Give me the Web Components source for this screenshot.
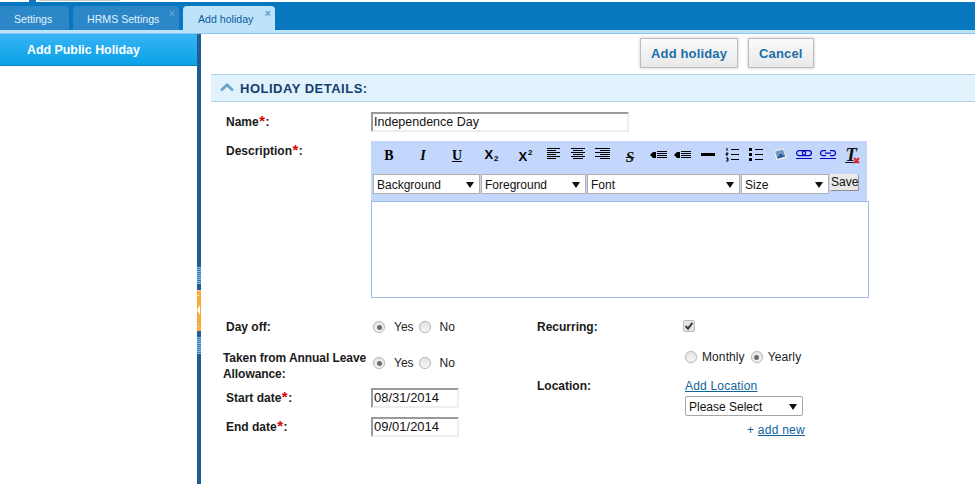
<!DOCTYPE html>
<html lang="en">
<head>
<meta charset="utf-8">
<title>Add holiday</title>
<style>
  html, body { margin: 0; height: 100%; overflow: hidden; background: #fff; }
  body { font: 12px "Liberation Sans", Arial, sans-serif; color: #111; }
</style>
</head>
<body>
<hr-app>
  <hr-topbar slot="top">
    <hr-tab>Settings</hr-tab>
    <hr-tab closable>HRMS Settings</hr-tab>
    <hr-tab closable active>Add holiday</hr-tab>
  </hr-topbar>
  <hr-sidebar slot="side">Add Public Holiday</hr-sidebar>

  <hr-actions>
    <hr-button>Add holiday</hr-button>
    <hr-button>Cancel</hr-button>
  </hr-actions>
  <hr-section>HOLIDAY DETAILS:</hr-section>

  <hr-holiday-form>
    <hr-label slot="name-label" required>Name</hr-label>
    <hr-input slot="name" width="258" size="12.5">Independence Day</hr-input>
    <hr-label slot="desc-label" required>Description</hr-label>
    <hr-editor slot="desc"></hr-editor>

    <hr-label slot="dayoff-label">Day off</hr-label>
    <hr-radio-group slot="dayoff"><hr-radio checked>Yes</hr-radio><hr-radio>No</hr-radio></hr-radio-group>
    <hr-label slot="taken-label">Taken from Annual Leave Allowance</hr-label>
    <hr-radio-group slot="taken"><hr-radio checked>Yes</hr-radio><hr-radio>No</hr-radio></hr-radio-group>
    <hr-label slot="start-label" required>Start date</hr-label>
    <hr-input slot="start" width="88">08/31/2014</hr-input>
    <hr-label slot="end-label" required>End date</hr-label>
    <hr-input slot="end" width="88">09/01/2014</hr-input>

    <hr-label slot="recurring-label">Recurring</hr-label>
    <hr-check slot="recurring"></hr-check>
    <hr-radio-group slot="period" tight><hr-radio>Monthly</hr-radio><hr-radio checked>Yearly</hr-radio></hr-radio-group>
    <hr-label slot="location-label">Location</hr-label>
    <hr-location slot="location"></hr-location>
  </hr-holiday-form>
</hr-app>

<script>
/** Build a shadow root from a markup string. */
function shadow (element, html) {
  element.attachShadow({ mode: 'open' }).innerHTML = html
  return element.shadowRoot
}

class HrApp extends HTMLElement {
  constructor () {
    super()
    shadow(this, `
      <style>
        :host { display: flex; flex-direction: column; height: 484px; width: 975px; overflow: hidden; }
        .body { display: flex; flex: 1; min-height: 0; }
        .divider {
          width: 4px; background: #1f5c94; margin-left: 197px;
          display: flex; flex-direction: column; padding-top: 233px; box-sizing: border-box;
        }
        .side { position: absolute; width: 197px; }
        .grip {
          height: 17px; flex: none;
          background: repeating-linear-gradient(#8dbde2 0 1px, #2f77b3 1px 2px);
        }
        .handle {
          height: 41px; flex: none; margin: 6px 0; background: #fca93c; position: relative;
          border-top: 1px solid #ffd28c; box-sizing: border-box;
        }
        .handle::before {
          content: ""; position: absolute; left: 1px; top: 4px; width: 1px; height: 30px;
          border-top: 1px solid #fff; border-bottom: 1px solid #fff;
        }
        .handle::after {
          content: ""; position: absolute; left: 0; top: 14px;
          border: 5px solid transparent; border-right: 3px solid #fff; border-left: 0;
        }
        main { flex: 1; min-width: 0; }
      </style>
      <slot name="top"></slot>
      <div class="body">
        <div class="side"><slot name="side"></slot></div>
        <div class="divider"><div class="grip"></div><div class="handle"></div><div class="grip"></div></div>
        <main><slot></slot></main>
      </div>`)
  }
}

class HrTopbar extends HTMLElement {
  constructor () {
    super()
    shadow(this, `
      <style>
        :host { display: block; height: 34px; background: #fff; }
        .logo { height: 2px; overflow: hidden; padding-left: 29px; display: flex; gap: 3px; }
        .logo i { display: block; width: 7px; height: 2px; background: #1b6fc0; }
        .logo b { display: block; width: 81px; height: 1px; background: #c4c8cc; }
        .bar {
          height: 28px; background: #0777bf; box-sizing: border-box; padding-top: 4px;
          display: flex; gap: 4px;
        }
        .rule { height: 4px; box-sizing: border-box; background: #bde3fb; border-bottom: 1px solid #8cc5ee; }
      </style>
      <div class="logo"><i></i><b></b></div>
      <div class="bar"><slot></slot></div>
      <div class="rule"></div>`)
  }
}

class HrTab extends HTMLElement {
  constructor () {
    super()
    shadow(this, `
      <style>
        :host {
          display: block; height: 24px; box-sizing: border-box; position: relative; flex: none;
          padding: 6px 0 0 14px; font-size: 10.6px; line-height: 14px; width: 106px;
          background: #2c87c9; color: #e4f2fb; border-radius: 4px 4px 0 0;
        }
        :host(:first-child) { width: 69px; border-top-left-radius: 0; }
        :host([active]) { background: #bde3fb; color: #0c5b98; padding-left: 15px; width: 92px; }
        .x { display: none; position: absolute; right: 4px; top: 1px; font: bold 11px/12px "Liberation Sans", sans-serif; color: #5ea2d2; }
        :host([closable]) .x { display: block; }
        :host([active]) .x { color: #5b9cc9; }
      </style>
      <slot></slot><span class="x">×</span>`)
  }
}

class HrSidebar extends HTMLElement {
  constructor () {
    super()
    shadow(this, `
      <style>
        :host {
          display: block; height: 32px; box-sizing: border-box; padding: 9px 0 0 27px;
          font: bold 12.4px/15px "Liberation Sans", sans-serif; color: #fff;
          background: linear-gradient(#37b4f3, #0aa2e8); border-bottom: 1px solid #0c84c2;
        }
      </style>
      <slot></slot>`)
  }
}

class HrActions extends HTMLElement {
  constructor () {
    super()
    shadow(this, `
      <style>
        :host {
          display: flex; gap: 10px; height: 40px; box-sizing: border-box;
          padding: 4px 0 0 439px; align-items: flex-start;
        }
      </style>
      <slot></slot>`)
  }
}

class HrButton extends HTMLElement {
  constructor () {
    super()
    shadow(this, `
      <style>
        :host {
          display: block; height: 30px; box-sizing: border-box; padding: 0 10px;
          font: bold 13px/29px "Liberation Sans", sans-serif; letter-spacing: .15px; color: #1b6fa8;
          background: linear-gradient(#fbfbfb, #e9e9e9); border: 1px solid #bdbdbd;
          box-shadow: 0 0 3px #c8c8c8;
        }
      </style>
      <slot></slot>`)
  }
}

class HrSection extends HTMLElement {
  constructor () {
    super()
    shadow(this, `
      <style>
        :host {
          display: flex; align-items: center; gap: 6px; height: 28px; box-sizing: border-box;
          margin-left: 10px; padding: 1px 0 0 9px;
          background: #e1f2fd; border-top: 1px solid #b0d0e6; border-bottom: 1px solid #b0d0e6;
          font: bold 13px/16px "Liberation Sans", sans-serif; letter-spacing: .5px; color: #123f6e;
        }
        svg { display: block; margin-top: -2px; }
      </style>
      <svg width="14" height="9" viewBox="0 0 14 9"><path d="M1 7.500 7 2l6 5.500" fill="none" stroke="#6ea3c9" stroke-width="2.800"/></svg>
      <slot></slot>`)
  }
}

class HrHolidayForm extends HTMLElement {
  constructor () {
    super()
    shadow(this, `
      <style>
        :host { display: block; margin-left: 10px; }
        .row { display: flex; }
        .lab { width: 160px; flex: none; box-sizing: border-box; padding-left: 15px; }
        .top { padding-top: 10px; height: 29px; box-sizing: border-box; }
        .top .lab, .center .lab { display: flex; align-items: center; }
        .desc { margin-top: 10px; height: 157px; }
        .desc .lab { padding-top: 2px; }
        .bottom { display: flex; margin-top: 20px; }
        .left { width: 326px; flex: none; }
        .center { height: 18px; }
        .center .lab { height: 100%; }
        .taken { height: 32px; margin-top: 14px; }
        .taken .lab { padding-left: 12px; line-height: 16px; letter-spacing: -.07px; }
        .taken .ctl { padding-top: 4px; }
        .date { height: 20px; margin-top: 6px; }
        .date + .date { margin-top: 9px; }
        .right .lab { width: 148px; padding-left: 0; }
        .period { margin-top: 12px; padding-left: 148px; height: 18px; display: flex; align-items: center; }
        .loc { margin-top: 12px; }
        .loc .lab { line-height: 16px; }
      </style>
      <div class="row top"><div class="lab"><slot name="name-label"></slot></div><slot name="name"></slot></div>
      <div class="row desc"><div class="lab"><slot name="desc-label"></slot></div><slot name="desc"></slot></div>
      <div class="bottom">
        <div class="left">
          <div class="row center"><div class="lab"><slot name="dayoff-label"></slot></div><slot name="dayoff"></slot></div>
          <div class="row taken"><div class="lab"><slot name="taken-label"></slot></div><div class="ctl"><slot name="taken"></slot></div></div>
          <div class="row center date"><div class="lab"><slot name="start-label"></slot></div><slot name="start"></slot></div>
          <div class="row center date"><div class="lab"><slot name="end-label"></slot></div><slot name="end"></slot></div>
        </div>
        <div class="right">
          <div class="row center"><div class="lab"><slot name="recurring-label"></slot></div><slot name="recurring"></slot></div>
          <div class="period"><slot name="period"></slot></div>
          <div class="row loc"><div class="lab"><slot name="location-label"></slot></div><slot name="location"></slot></div>
        </div>
      </div>`)
  }
}

class HrLabel extends HTMLElement {
  constructor () {
    super()
    shadow(this, `
      <style>
        :host { display: block; font: bold 12px/16px "Liberation Sans", sans-serif; color: #1a1a1a; }
        .req { display: none; color: #e00000; font-size: 15px; line-height: 12px; margin: 0 .5px; }
        :host([required]) .req { display: inline; }
      </style>
      <slot></slot><span class="req">*</span>:`)
  }
}

class HrInput extends HTMLElement {
  constructor () {
    super()
    shadow(this, `
      <style>
        :host {
          display: block; height: 20px; box-sizing: border-box; padding-left: 1px;
          font: 13px/16px "Liberation Sans", sans-serif; color: #111; background: #fff;
          border: 2px solid; border-color: #9a9a9a #eeeeee #eeeeee #9a9a9a;
        }
      </style>
      <slot></slot>`)
    this.style.width = this.getAttribute('width') + 'px'
    if (this.hasAttribute('size')) this.style.fontSize = this.getAttribute('size') + 'px'
  }
}

class HrRadio extends HTMLElement {
  constructor () {
    super()
    shadow(this, `
      <style>
        :host { display: inline-flex; align-items: center; font: 12px/16px "Liberation Sans", sans-serif; color: #222; }
        .dot {
          width: 12px; height: 12px; border-radius: 50%; box-sizing: border-box; position: relative; flex: none;
          background: linear-gradient(#e4e4e4, #f6f6f6); border: 1px solid #b8b8b8; box-shadow: 0 0 1px #ccc;
          margin-right: var(--radio-gap, 9px);
        }
        :host([checked]) .dot::after {
          content: ""; position: absolute; left: 2.500px; top: 2.500px; width: 5px; height: 5px;
          border-radius: 50%; background: #6c6c6c;
        }
      </style>
      <span class="dot"></span><slot></slot>`)
  }
}

class HrRadioGroup extends HTMLElement {
  constructor () {
    super()
    shadow(this, `
      <style>
        :host { display: flex; align-items: center; gap: 5px; height: 18px; padding-left: 2px; }
        :host([tight]) { padding-left: 0; gap: 6px; --radio-gap: 5px; letter-spacing: .1px; }
      </style>
      <slot></slot>`)
  }
}

class HrCheck extends HTMLElement {
  constructor () {
    super()
    shadow(this, `
      <style>
        :host { display: block; margin: 2px 0 0 -2px; width: 12px; height: 12px; }
        svg { display: block; }
      </style>
      <svg width="12" height="12" viewBox="0 0 12 12">
        <rect x=".5" y=".5" width="11" height="11" rx="1.500" fill="#e6e6e6" stroke="#bcbcbc"/>
        <path d="M2.600 6 5 8.600 9.400 2.800" fill="none" stroke="#3a3a3a" stroke-width="2"/>
      </svg>`)
  }
}

class HrSelect extends HTMLElement {
  constructor () {
    super()
    shadow(this, `
      <style>
        :host {
          display: flex; align-items: center; justify-content: space-between; box-sizing: border-box;
          height: 20px; padding: 1px 5px 0 3px; background: #fff;
          font: 12px/16px "Liberation Sans", sans-serif; color: #111;
          border: 1px solid #b0b0b0;
        }
        .arrow { width: 0; height: 0; border: 4px solid transparent; border-top: 6px solid #111; border-bottom: 0; }
      </style>
      <slot></slot><span class="arrow"></span>`)
    this.style.width = this.getAttribute('width') + 'px'
  }
}

class HrLocation extends HTMLElement {
  constructor () {
    super()
    shadow(this, `
      <style>
        :host { display: block; font: 12px/16px "Liberation Sans", sans-serif; width: 120px; }
        a { color: #0f639b; text-decoration: underline; }
        .addloc { display: block; letter-spacing: .2px; height: 18px; }
        .pick { border-radius: 2px; border-color: #a6a6a6; }
        .new { display: block; margin-top: 6px; padding-left: 62px; color: #0f639b; letter-spacing: .25px; }
      </style>
      <a class="addloc" href="#">Add Location</a>
      <hr-select class="pick" width="118">Please Select</hr-select>
      <span class="new">+ <a href="#">add new</a></span>`)
  }
}

/* icon strokes of the editor toolbar */
const LINES = (rows) => rows.map(([x1, y, x2]) => `<path d="M${x1} ${y}.5H${x2}"/>`).join('')
const BULLET = '<path d="M0 4 3 1h3v6H3z" fill="#000" stroke="none"/>'
const ICONS = {
  left: LINES([[0, 0, 13], [0, 2, 9], [0, 4, 13], [0, 6, 9], [0, 8, 13], [0, 10, 9]]),
  center: LINES([[0, 0, 14], [2, 2, 12], [0, 4, 14], [2, 6, 12], [0, 8, 14], [2, 10, 12]]),
  right: LINES([[0, 0, 15], [5, 2, 15], [0, 4, 15], [5, 6, 15], [0, 8, 15], [5, 10, 15]]),
  outdent: LINES([[7, 0, 17], [7, 2, 17], [7, 4, 17], [7, 6, 17]]) + BULLET,
  indent: LINES([[7, 0, 17], [7, 2, 17], [7, 4, 17], [7, 6, 17]]) + BULLET,
  hr: '<rect x="0" y="3" width="14" height="3" fill="#000" stroke="none"/>',
  ol: LINES([[6, 1, 14], [6, 6, 14], [6, 11, 14]]) + '<path d="M1 0h1v3M1 5h2v1H1v1h2M1 10h2v1H2h1v2H1"/>',
  ul: LINES([[6, 1, 14], [6, 6, 14], [6, 11, 14]]) + '<path d="M0 0h3v3H0zM0 5h3v3H0zM0 10h3v3H0z" fill="#000" stroke="none"/>',
  image: '<path d="M1 3 12 .5 15.500 11 4 14z" fill="#eef2f8" stroke="#c4cfe0"/><path d="M3 4.500 11 2.500l2.500 7-8 2.200z" fill="#6f9bcb" stroke="none"/><path d="M5 11 8.500 6.500 13 9.500l-7.500 2z" fill="#2f5b8f" stroke="none"/>',
  link: '<g stroke="#0000c8" stroke-width="1.200" fill="none"><rect x=".6" y="1.600" width="9" height="5" rx="2.500"/><rect x="6.400" y="1.600" width="9" height="5" rx="2.500"/><path d="M0 9.500H16" stroke-width="1"/></g>',
  unlink: '<g stroke="#0000c8" stroke-width="1.200" fill="none"><path d="M6 1.600H3a2.500 2.500 0 0 0 0 5h3M10 1.600h3a2.500 2.500 0 0 1 0 5h-3M5 4.100h6"/><path d="M0 9.500H16" stroke-width="1"/></g>'
}

class HrEditor extends HTMLElement {
  constructor () {
    super()
    const svg = (name, w, h) => `<svg width="${w}" height="${h}" viewBox="0 0 ${w} ${h}" fill="none" stroke="#000">${ICONS[name]}</svg>`
    shadow(this, `
      <style>
        :host { display: block; width: 497px; }
        .tools { height: 60px; width: 496px; box-sizing: border-box; background: #c2d7fb; padding-left: 2px; }
        .icons { height: 33px; display: flex; align-items: center; padding-bottom: 6px; box-sizing: border-box; }
        .icons > * { flex: none; display: flex; justify-content: center; align-items: center; height: 20px; }
        .g { font: bold 14px/16px "Liberation Serif", serif; color: #000; width: 34px; margin-top: 3px; }
        .g.i { font-style: italic; }
        .g.u { text-decoration: underline; }
        .x { font: bold 13px/16px "Liberation Sans", sans-serif; }
        .x small { font-size: 8px; position: relative; left: 1px; }
        .x small.d { top: 4px; }
        .x small.s { top: -4px; }
        .t { width: 24px; }
        .strike { text-decoration: line-through; font: italic bold 15px/16px "Liberation Serif", serif; width: 24px; margin: 4px 0 0 4px; }
        .clear { font: italic bold 19px/18px "Liberation Serif", serif; width: 24px; position: relative; text-decoration: underline; margin-left: -1px; }
        .clear svg { position: absolute; right: 3px; bottom: 1px; }
        svg { display: block; }
        .selects { display: flex; gap: 1px; align-items: flex-start; }
        .save {
          height: 17px; width: 29px; box-sizing: border-box; margin-top: 0; text-align: center;
          font: 12px/15px "Liberation Sans", sans-serif; color: #111;
          background: #e8e8e8; border: 1px solid; border-color: #eee #8f8f8f #8f8f8f #eee;
        }
        .area { height: 97px; width: 498px; box-sizing: border-box; background: #fff; border: 1px solid #9dbde8; }
      </style>
      <div class="tools">
        <div class="icons">
          <span class="g" style="margin-left:-1px">B</span>
          <span class="g i">I</span>
          <span class="g u">U</span>
          <span class="g x" style="margin-top:1px">X<small class="d">2</small></span>
          <span class="g x" style="margin-top:5px">X<small class="s">2</small></span>
          <span class="t" style="margin-top:-2px">${svg('left', 14, 11)}</span>
          <span class="t" style="margin-top:-2px">${svg('center', 14, 11)}</span>
          <span class="t" style="margin-top:-2px">${svg('right', 15, 11)}</span>
          <span class="strike">S</span>
          <span class="t" style="width:28px;margin-left:2px">${svg('outdent', 17, 8)}</span>
          <span class="t" style="margin-left:-2px">${svg('indent', 17, 8)}</span>
          <span class="t" style="margin-left:2px">${svg('hr', 14, 9)}</span>
          <span class="t">${svg('ol', 15, 14)}</span>
          <span class="t">${svg('ul', 15, 14)}</span>
          <span class="t">${svg('image', 16, 15)}</span>
          <span class="t">${svg('link', 16, 11)}</span>
          <span class="t">${svg('unlink', 16, 11)}</span>
          <span class="clear">T<svg width="7" height="7" viewBox="0 0 7 7"><path d="M1 1l5 5M6 1 1 6" stroke="#e8212b" stroke-width="2"/></svg></span>
        </div>
        <div class="selects">
          <hr-select width="107">Background</hr-select>
          <hr-select width="105">Foreground</hr-select>
          <hr-select width="153">Font</hr-select>
          <hr-select width="88">Size</hr-select>
          <div class="save">Save</div>
        </div>
      </div>
      <div class="area"></div>`)
  }
}

customElements.define('hr-app', HrApp)
customElements.define('hr-topbar', HrTopbar)
customElements.define('hr-tab', HrTab)
customElements.define('hr-sidebar', HrSidebar)
customElements.define('hr-actions', HrActions)
customElements.define('hr-button', HrButton)
customElements.define('hr-section', HrSection)
customElements.define('hr-holiday-form', HrHolidayForm)
customElements.define('hr-label', HrLabel)
customElements.define('hr-input', HrInput)
customElements.define('hr-radio', HrRadio)
customElements.define('hr-radio-group', HrRadioGroup)
customElements.define('hr-check', HrCheck)
customElements.define('hr-select', HrSelect)
customElements.define('hr-location', HrLocation)
customElements.define('hr-editor', HrEditor)
</script>
</body>
</html>
